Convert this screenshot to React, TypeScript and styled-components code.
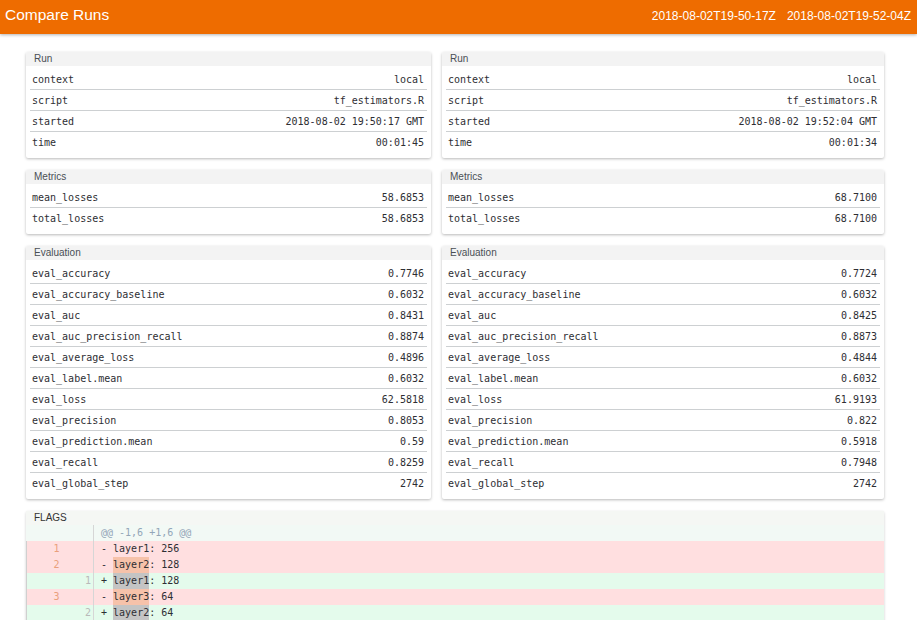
import React from "react";
import styled, { createGlobalStyle } from "styled-components";

const GlobalStyle = createGlobalStyle`
  html, body { margin: 0; padding: 0; background: #ffffff; }
  body { font-family: "Liberation Sans", Arial, sans-serif; }
  * { box-sizing: border-box; }
`;

const TopBar = styled.header`
  height: 34px;
  background: #ee6c00;
  box-shadow: 0 1px 3px rgba(0, 0, 0, 0.3);
  display: flex;
  align-items: center;
  justify-content: space-between;
  padding: 0 6px 0 5px;
  color: #ffffff;
  position: relative;
  z-index: 1;
`;

const Title = styled.div`
  font-size: 15.5px;
  padding-bottom: 4px;
`;

const RunIds = styled.div`
  display: flex;
  gap: 11px;
  font-size: 12px;
  padding-bottom: 2px;
`;

const Main = styled.main`
  padding: 18px 0 0 26px;
  width: 884px;
`;

const Columns = styled.div`
  display: grid;
  grid-template-columns: 405px 442px;
  column-gap: 11px;
`;

const Column = styled.div`
  display: flex;
  flex-direction: column;
  gap: 12px;
`;

const Card = styled.section`
  background: #ffffff;
  border-radius: 2px;
  box-shadow: 0 1px 3px rgba(0, 0, 0, 0.28);
  padding: 0 4px 6px;
`;

const CardHeader = styled.div`
  margin: 0 -4px;
  height: 14px;
  line-height: 14px;
  padding-left: 8px;
  background: #f3f3f3;
  font-size: 10px;
  color: #4a4f55;
  border-radius: 2px 2px 0 0;
`;

const Rows = styled.div`
  margin-top: 3px;
`;

const Row = styled.div`
  height: 21px;
  display: flex;
  align-items: center;
  justify-content: space-between;
  padding: 0 3px 0 2px;
  border-bottom: 1px solid #cdd0d2;
  font-family: "DejaVu Sans Mono", "Liberation Mono", monospace;
  font-size: 10px;
  color: #2e2e33;
  &:last-child {
    height: 20px;
    border-bottom: none;
  }
`;

const FlagsCard = styled.section`
  margin-top: 12px;
  width: 858px;
  background: #ffffff;
  box-shadow: 0 1px 3px rgba(0, 0, 0, 0.2);
  border-radius: 2px;
  padding-bottom: 6px;
`;

const FlagsHeader = styled.div`
  height: 14px;
  line-height: 14px;
  padding-left: 8px;
  background: #f5f7f4;
  font-size: 10px;
  color: #333;
`;

type Kind = "info" | "del" | "add";

const bgFor: Record<Kind, string> = {
  info: "#f2f9f5",
  del: "#ffdfe0",
  add: "#e4fbec",
};

const DiffRow = styled.div<{ $kind: Kind }>`
  display: flex;
  height: 16px;
  line-height: 16px;
  background: ${(p) => bgFor[p.$kind]};
  font-family: "DejaVu Sans Mono", "Liberation Mono", monospace;
  font-size: 10px;
`;

const Gutter = styled.div<{ $kind: Kind }>`
  display: flex;
  width: 68px;
  flex: none;
  border-left: 1px solid ${(p) => (p.$kind === "info" ? "transparent" : "#d0d0d0")};
  border-right: 1px solid #d6d6d6;
`;

const LineNo = styled.span<{ $w: number; $old?: boolean }>`
  width: ${(p) => p.$w}px;
  text-align: right;
  padding-right: 2px;
  color: ${(p) => (p.$old ? "#e9a07c" : "#b9b9b9")};
`;

const Code = styled.div<{ $kind: Kind }>`
  padding-left: 7px;
  white-space: pre;
  color: ${(p) => (p.$kind === "info" ? "#93a6b8" : "#2e2e33")};
`;

const Mark = styled.span<{ $kind: Kind }>`
  display: inline-block;
  height: 16px;
  background: ${(p) => (p.$kind === "del" ? "#f6c2aa" : "#c4c4c4")};
`;

type Pair = [string, string];

const runLeft: Pair[] = [
  ["context", "local"],
  ["script", "tf_estimators.R"],
  ["started", "2018-08-02 19:50:17 GMT"],
  ["time", "00:01:45"],
];
const runRight: Pair[] = [
  ["context", "local"],
  ["script", "tf_estimators.R"],
  ["started", "2018-08-02 19:52:04 GMT"],
  ["time", "00:01:34"],
];
const metricsLeft: Pair[] = [
  ["mean_losses", "58.6853"],
  ["total_losses", "58.6853"],
];
const metricsRight: Pair[] = [
  ["mean_losses", "68.7100"],
  ["total_losses", "68.7100"],
];
const evalKeys = [
  "eval_accuracy",
  "eval_accuracy_baseline",
  "eval_auc",
  "eval_auc_precision_recall",
  "eval_average_loss",
  "eval_label.mean",
  "eval_loss",
  "eval_precision",
  "eval_prediction.mean",
  "eval_recall",
  "eval_global_step",
];
const evalLeftVals = ["0.7746", "0.6032", "0.8431", "0.8874", "0.4896", "0.6032", "62.5818", "0.8053", "0.59", "0.8259", "2742"];
const evalRightVals = ["0.7724", "0.6032", "0.8425", "0.8873", "0.4844", "0.6032", "61.9193", "0.822", "0.5918", "0.7948", "2742"];

const evalLeft: Pair[] = evalKeys.map((k, i) => [k, evalLeftVals[i]]);
const evalRight: Pair[] = evalKeys.map((k, i) => [k, evalRightVals[i]]);

function InfoCard({ title, rows }: { title: string; rows: Pair[] }) {
  return (
    <Card>
      <CardHeader>{title}</CardHeader>
      <Rows>
        {rows.map(([k, v]) => (
          <Row key={k}>
            <span>{k}</span>
            <span>{v}</span>
          </Row>
        ))}
      </Rows>
    </Card>
  );
}

type DiffLine = {
  kind: Kind;
  oldNo?: number;
  newNo?: number;
  sign: string;
  mark?: string;
  rest: string;
};

const diffLines: DiffLine[] = [
  { kind: "info", sign: "", rest: "@@ -1,6 +1,6 @@" },
  { kind: "del", oldNo: 1, sign: "- ", rest: "layer1: 256" },
  { kind: "del", oldNo: 2, sign: "- ", mark: "layer2", rest: ": 128" },
  { kind: "add", newNo: 1, sign: "+ ", mark: "layer1", rest: ": 128" },
  { kind: "del", oldNo: 3, sign: "- ", mark: "layer3", rest: ": 64" },
  { kind: "add", newNo: 2, sign: "+ ", mark: "layer2", rest: ": 64" },
  { kind: "add", newNo: 3, sign: "+ ", mark: "layer3", rest: ": 32" },
  { kind: "info", oldNo: 4, newNo: 4, sign: "  ", rest: "dropout: 0.4" },
];

function FlagsDiff() {
  return (
    <FlagsCard>
      <FlagsHeader>FLAGS</FlagsHeader>
      {diffLines.map((l, i) => (
        <DiffRow key={i} $kind={l.kind}>
          <Gutter $kind={l.kind}>
            <LineNo $w={35} $old>{l.oldNo ?? ""}</LineNo>
            <LineNo $w={32}>{l.newNo ?? ""}</LineNo>
          </Gutter>
          <Code $kind={l.kind}>
            {l.sign}
            {l.mark ? <Mark $kind={l.kind}>{l.mark}</Mark> : null}
            {l.rest}
          </Code>
        </DiffRow>
      ))}
    </FlagsCard>
  );
}

export default function App() {
  return (
    <>
      <GlobalStyle />
      <TopBar>
        <Title>Compare Runs</Title>
        <RunIds>
          <span>2018-08-02T19-50-17Z</span>
          <span>2018-08-02T19-52-04Z</span>
        </RunIds>
      </TopBar>
      <Main>
        <Columns>
          <Column>
            <InfoCard title="Run" rows={runLeft} />
            <InfoCard title="Metrics" rows={metricsLeft} />
            <InfoCard title="Evaluation" rows={evalLeft} />
          </Column>
          <Column>
            <InfoCard title="Run" rows={runRight} />
            <InfoCard title="Metrics" rows={metricsRight} />
            <InfoCard title="Evaluation" rows={evalRight} />
          </Column>
        </Columns>
        <FlagsDiff />
      </Main>
    </>
  );
}
